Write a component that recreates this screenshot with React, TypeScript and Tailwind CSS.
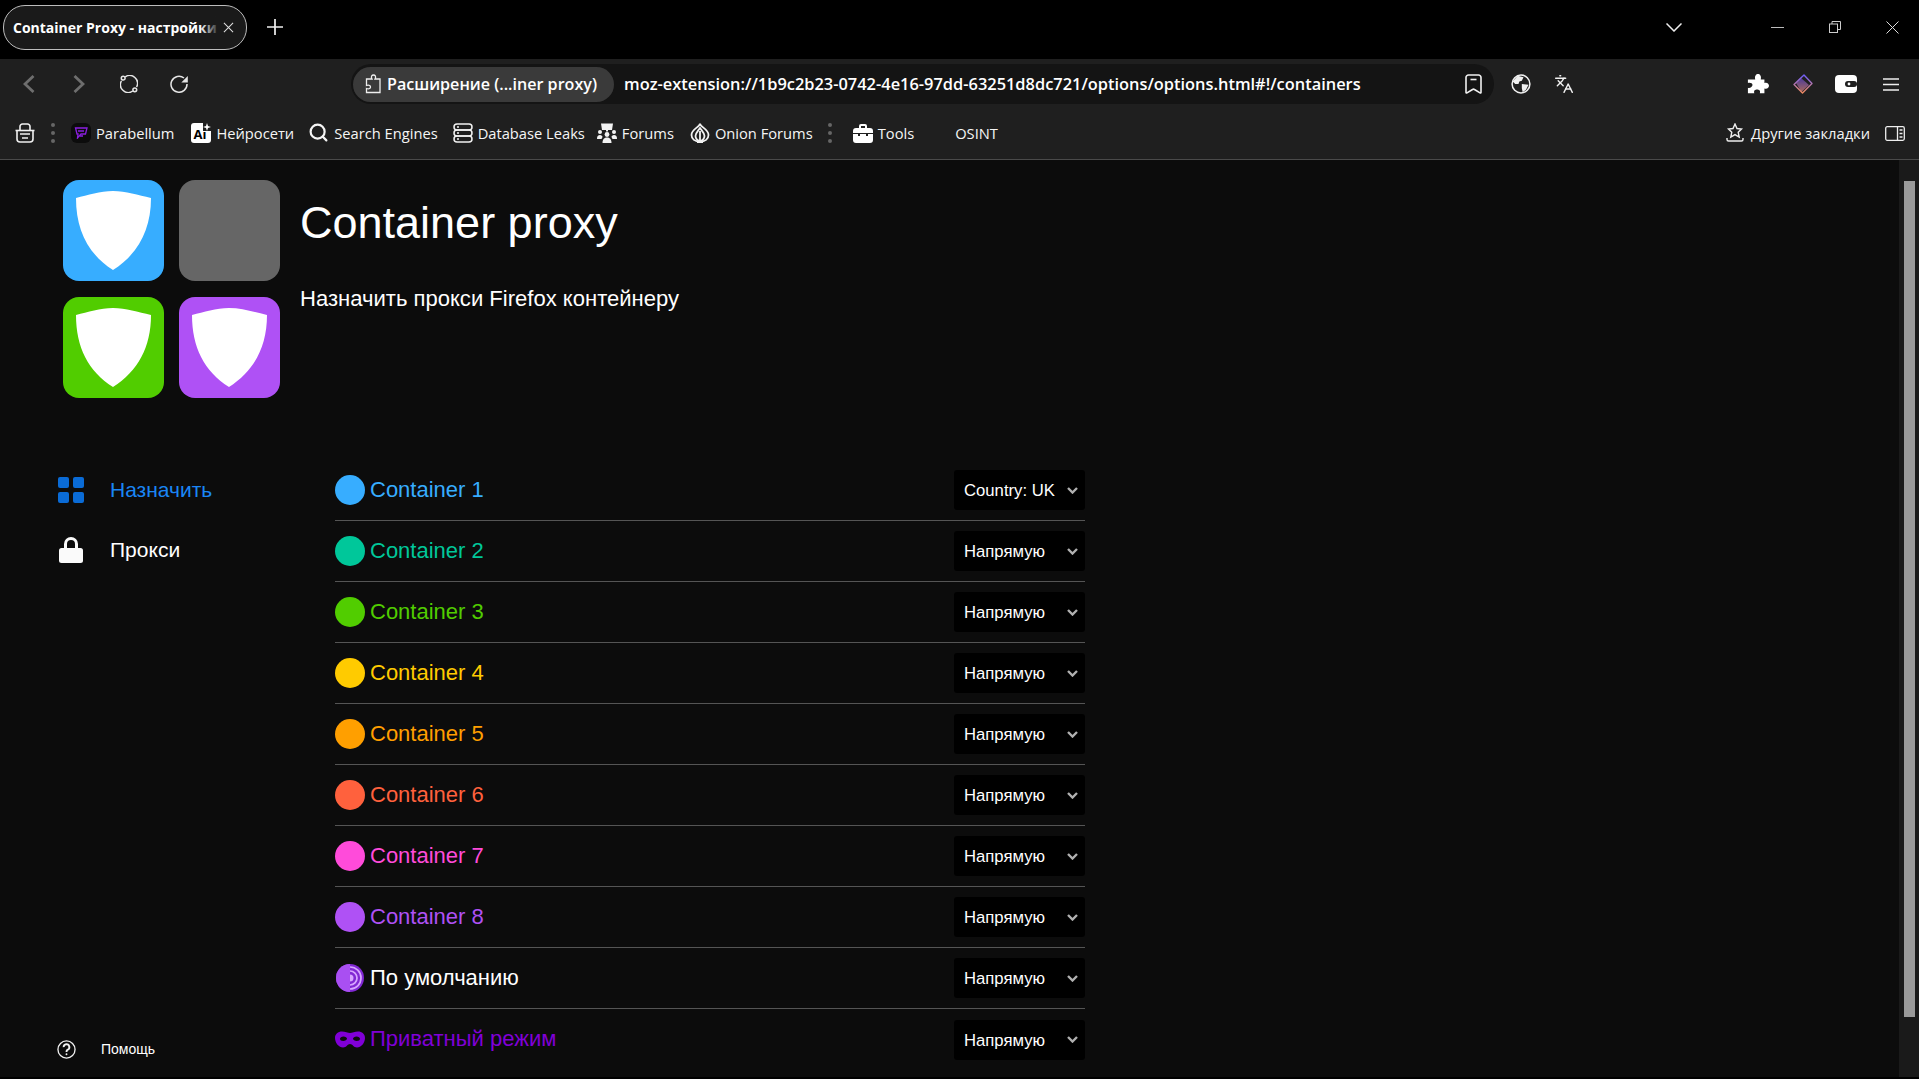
import { Languages, Search } from "lucide-react";

const font = "font-['Liberation_Sans',Arial,sans-serif]";
const uiFont = "font-['Open_Sans','Noto_Sans',sans-serif]";

const containers = [
  { name: "Container 1", color: "#37adff", proxy: "Country: UK" },
  { name: "Container 2", color: "#00c79a", proxy: "Напрямую" },
  { name: "Container 3", color: "#51cd00", proxy: "Напрямую" },
  { name: "Container 4", color: "#ffcb00", proxy: "Напрямую" },
  { name: "Container 5", color: "#ff9f00", proxy: "Напрямую" },
  { name: "Container 6", color: "#ff613d", proxy: "Напрямую" },
  { name: "Container 7", color: "#ff4bda", proxy: "Напрямую" },
  { name: "Container 8", color: "#af51f5", proxy: "Напрямую" },
];

function Shield() {
  return (
    <svg viewBox="0 0 101 101" className="w-[101px] h-[101px]">
      <path d="M13 18 C25 15 37 11 50 11 C63 11 75 15 88 18 C88 50 75 74 50 90 C25 74 13 50 13 18 Z" fill="#fff" />
    </svg>
  );
}

function Tile({ color, shield = true }: { color: string; shield?: boolean }) {
  return (
    <div className="w-[101px] h-[101px] rounded-[16px]" style={{ backgroundColor: color }}>
      {shield && <Shield />}
    </div>
  );
}

function Row({ icon, name, color, proxy, last }: { icon: React.ReactNode; name: string; color: string; proxy: string; last?: boolean }) {
  return (
    <div className={`h-[61px] flex items-center justify-between ${last ? "" : "border-b border-[#555555]"}`}>
      <div className="flex items-center gap-[5px] text-[22px]" style={{ color }}>
        {icon}
        <span className="pb-[2px]">{name}</span>
      </div>
      <div className="w-[131px] h-[40px] bg-black rounded-[3px] flex items-center justify-between pl-[10px] pr-[7px] text-white text-[16.7px]">
        <span className="pt-[2px]">{proxy}</span>
        <svg viewBox="0 0 11 7" className="w-[11px] h-[7px]" fill="none" stroke="#b0b0b0" strokeWidth="2.4">
          <path d="M1 1 L5.5 5.5 L10 1" />
        </svg>
      </div>
    </div>
  );
}

function Dot({ color }: { color: string }) {
  return <div className="w-[30px] h-[30px] rounded-full" style={{ backgroundColor: color }} />;
}

function TorIcon() {
  return (
    <svg viewBox="0 0 30 30" className="w-[30px] h-[30px]">
      <circle cx="15" cy="15" r="14" fill="#8128d4" />
      <path d="M15 1 A14 14 0 0 0 15 29 Z" fill="#a94ff2" />
      <g fill="none" stroke="#d7a6ff" strokeWidth="1.7">
        <path d="M15 4 A11 11 0 0 1 15 26" />
        <path d="M15 8 A7 7 0 0 1 15 22" />
      </g>
      <path d="M15 11.5 A3.5 3.5 0 0 1 15 18.5 Z" fill="#d7a6ff" />
    </svg>
  );
}

function MaskIcon() {
  return (
    <svg viewBox="0 0 30 17" className="w-[30px] h-[17px]">
      <path
        fillRule="evenodd"
        fill="#8000d7"
        d="M7 0.5 C10 0.5 13 2 15 2 C17 2 20 0.5 23 0.5 C27 0.5 30 3 30 7 C30 12 26 16.5 22 16.5 C18.5 16.5 17.5 13 15 13 C12.5 13 11.5 16.5 8 16.5 C4 16.5 0 12 0 7 C0 3 3 0.5 7 0.5 Z M8.5 5.5 C6.5 5.5 5 6.5 5 7.8 C5 9.2 6.5 10 8.2 10 C10.2 10 12 9 12 7.8 C12 6.5 10.5 5.5 8.5 5.5 Z M21.5 5.5 C19.5 5.5 18 6.5 18 7.8 C18 9 19.8 10 21.8 10 C23.5 10 25 9.2 25 7.8 C25 6.5 23.5 5.5 21.5 5.5 Z"
      />
    </svg>
  );
}

function Bm({ icon, label }: { icon?: React.ReactNode; label: string }) {
  return (
    <div className="flex items-center gap-[5px] text-[#f5f5f5] text-[14.7px]">
      {icon}
      <span>{label}</span>
    </div>
  );
}

function Dots() {
  return (
    <div className="flex flex-col gap-[4px]">
      <div className="w-[4px] h-[4px] rounded-full bg-[#666666]" />
      <div className="w-[4px] h-[4px] rounded-full bg-[#666666]" />
      <div className="w-[4px] h-[4px] rounded-full bg-[#666666]" />
    </div>
  );
}

function BrowserChrome() {
  return (
    <div className={uiFont}>
      <div className="h-[59px] bg-black flex items-center text-white">
        <div className="relative ml-[3px] mt-[-5px] w-[244px] h-[45px] rounded-[22px] border border-[#bdbdbd] bg-[#1a1a1a] flex items-center pl-[9px] pr-[12px] justify-between">
          <span className="text-[14px] font-bold w-[206px] whitespace-nowrap">Container Proxy - настройки</span>
          <div className="absolute left-[196px] top-[10px] w-[20px] h-[23px] bg-gradient-to-r from-transparent to-[#1a1a1a]" />
          <svg viewBox="0 0 12 12" className="w-[11px] h-[11px] relative" fill="none" stroke="#e0e0e0" strokeWidth="1.1">
            <path d="M1 1 L11 11 M11 1 L1 11" />
          </svg>
        </div>
        <svg viewBox="0 0 16 16" className="w-[16px] h-[16px] ml-[20px] mt-[-5px]" fill="none" stroke="#f0f0f0" strokeWidth="1.7">
          <path d="M8 0 V16 M0 8 H16" />
        </svg>
        <div className="flex-1" />
        <svg viewBox="0 0 16 9" className="w-[16px] h-[9px] mt-[-5px]" fill="none" stroke="#eeeeee" strokeWidth="1.5">
          <path d="M0.5 0.5 L8 8 L15.5 0.5" />
        </svg>
        <div className="ml-[89px] mt-[-5px] w-[13px] h-px bg-[#bbbbbb]" />
        <svg viewBox="0 0 12 12" className="w-[12px] h-[12px] ml-[45px] mt-[-5px]" fill="none" stroke="#cccccc">
          <rect x="0.5" y="3" width="8" height="8.5" />
          <path d="M3 3 V0.5 H11.5 V8.5 H8.5" />
        </svg>
        <svg viewBox="0 0 13 13" className="w-[13px] h-[13px] ml-[45px] mr-[20px] mt-[-5px]" fill="none" stroke="#dddddd">
          <path d="M0.5 0.5 L12.5 12.5 M12.5 0.5 L0.5 12.5" />
        </svg>
      </div>

      <div className="h-[45px] bg-[#1f1f1f] flex items-center pt-[5px] text-white">
        <svg viewBox="0 0 12 18" className="w-[12px] h-[18px] ml-[23px]" fill="none" stroke="#6e6e6e" strokeWidth="2.8">
          <path d="M10.5 1 L2 9 L10.5 17" />
        </svg>
        <svg viewBox="0 0 12 18" className="w-[12px] h-[18px] ml-[38px]" fill="none" stroke="#6e6e6e" strokeWidth="2.8">
          <path d="M1.5 1 L10 9 L1.5 17" />
        </svg>
        <svg viewBox="0 0 18 18" className="w-[18px] h-[18px] ml-[35px]" fill="none" stroke="#e6e6e6" strokeWidth="1.5">
          <path d="M5.2 2 A7.8 7.8 0 0 1 16.6 12" />
          <path d="M12.8 16 A7.8 7.8 0 0 1 1.4 6" />
          <circle cx="3.2" cy="3.2" r="1.9" />
          <circle cx="14.8" cy="14.8" r="1.9" />
        </svg>
        <svg viewBox="0 0 18 18" className="w-[18px] h-[18px] ml-[32px]" fill="none" stroke="#e6e6e6" strokeWidth="1.5">
          <path d="M14 3 A8 8 0 1 0 17 9" />
          <path d="M17.8 1 V7.5 H11.3 Z" fill="#e6e6e6" stroke="none" />
        </svg>
        <div className="ml-[163px] w-[1143px] h-[40px] rounded-[20px] bg-[#141414] flex items-center pl-[2px] pr-[12px]">
          <div className="w-[261px] h-[35px] rounded-[18px] bg-[#3a3a3a] flex items-center pl-[11px] gap-[5px] text-[16.1px] font-semibold whitespace-nowrap">
            <svg viewBox="0 0 18 20" className="w-[18px] h-[20px]" fill="none" stroke="#eeeeee" strokeWidth="1.3">
              <path d="M6 5 H8 C6.5 2.5 8 1 9.5 1 C11 1 12.5 2.5 11 5 H16 V18.5 H2.5 V14.5 C5.5 15.5 6.5 14 6.5 13 C6.5 12 5.5 10.5 2.5 11.5 V5 Z" />
            </svg>
            <span>Расширение (...iner proxy)</span>
          </div>
          <span className="ml-[10px] text-[16.4px] font-semibold text-white flex-1 whitespace-nowrap">moz-extension://1b9c2b23-0742-4e16-97dd-63251d8dc721/options/options.html#!/containers</span>
          <svg viewBox="0 0 17 20" className="w-[17px] h-[20px]" fill="none" stroke="#f0f0f0" strokeWidth="1.6">
            <path d="M3.5 1 H13.5 A2.5 2.5 0 0 1 16 3.5 V18.5 C16 19 15.5 19.2 15 18.9 L9.5 15.5 C8.8 15 8.2 15 7.5 15.5 L2 18.9 C1.5 19.2 1 19 1 18.5 V3.5 A2.5 2.5 0 0 1 3.5 1 Z" />
            <path d="M5.5 5.5 H11.5" />
          </svg>
        </div>
        <svg viewBox="0 0 24 24" className="w-[20px] h-[20px] ml-[17px]" fill="none">
          <circle cx="12" cy="12" r="10.7" stroke="#f0f0f0" strokeWidth="1.8" />
          <path d="M8 2 L15 4 L13 8 L10 9 L9 12 L5 12 L2 9 Z M13 12 L21 13 L18 19 L14 22 L13 17 Z" fill="#f0f0f0" />
        </svg>
        <Languages size={20} strokeWidth={1.7} className="ml-[23px] text-[#f0f0f0]" />
        <div className="flex-1" />
        <svg viewBox="0 0 24 24" className="w-[22px] h-[22px]" fill="#ffffff">
          <path d="M3 7 H9 C8 3 10 1 12 1 C14 1 16 3 15 7 H19 V11 C22 10 24 12 24 14 C24 16 22 18 19 17 V22 H14 C15 19 13 18 11 18 C9 18 7 19 8 22 H1 V16 C3 17 6 15 6 13 C6 11 3 10 1 11 V7 Z" />
        </svg>
        <svg viewBox="0 0 20 20" className="w-[20px] h-[20px] ml-[24px]" fill="none">
          <defs>
            <linearGradient id="gem" x1="0" y1="0" x2="0" y2="1">
              <stop offset="0" stopColor="#6d5dfc" />
              <stop offset="1" stopColor="#f08a5d" />
            </linearGradient>
            <linearGradient id="gemfill" x1="0" y1="0" x2="0" y2="1">
              <stop offset="0" stopColor="#4a3a9c" />
              <stop offset="1" stopColor="#a8685c" />
            </linearGradient>
          </defs>
          <path d="M7.5 3.5 L3 9 L8.5 18 L16 11 Z" fill="url(#gemfill)" />
          <path d="M11 1 L19 9.5 L9.5 19 L1 10.5 Z" stroke="url(#gem)" strokeWidth="1.4" strokeLinejoin="round" />
        </svg>
        <svg viewBox="0 0 22 18" className="w-[22px] h-[18px] ml-[22px]">
          <path d="M4 0 H18 A4 4 0 0 1 22 4 V14 A4 4 0 0 1 18 18 H4 A4 4 0 0 1 0 14 V4 A4 4 0 0 1 4 0 Z" fill="#fff" />
          <rect x="10" y="6" width="12" height="6" rx="3" fill="#1f1f1f" />
          <circle cx="14" cy="9" r="1.4" fill="#fff" />
        </svg>
        <svg viewBox="0 0 16 13" className="w-[16px] h-[13px] ml-[26px] mr-[20px]" fill="none" stroke="#eeeeee" strokeWidth="1.4">
          <path d="M0 1 H16 M0 6.5 H16 M0 12 H16" />
        </svg>
      </div>

      <div className="h-[56px] bg-[#1f1f1f] border-b border-[#4a4a4a] flex items-center pt-[3px]">
        <svg viewBox="0 0 20 20" className="w-[20px] h-[20px] ml-[15px]" fill="none" stroke="#f0f0f0" strokeWidth="1.6">
          <path d="M5 7 V3.5 A2.5 2.5 0 0 1 7.5 1 H12.5 A2.5 2.5 0 0 1 15 3.5 V7" />
          <path d="M0.5 7.5 H19.5" />
          <path d="M2 8 V16 A3 3 0 0 0 5 19 H15 A3 3 0 0 0 18 16 V8" />
          <path d="M5 11 H15 M7 15 H13" />
        </svg>
        <div className="ml-[16px]"><Dots /></div>
        <div className="ml-[16px]">
          <Bm
            label="Parabellum"
            icon={
              <div className="w-[20px] h-[20px] rounded-[6px] bg-[#0c0c0c] flex items-center justify-center">
                <svg viewBox="0 0 14 12" className="w-[14px] h-[12px]" fill="none" stroke="#8a1fe0" strokeWidth="1.3">
                  <path d="M1.5 1 H13 L11.5 7 H7 L3.5 11 L4 7 H3 Z" />
                  <path d="M4 4 H10 M6 9 H9" />
                </svg>
              </div>
            }
          />
        </div>
        <div className="ml-[17px]">
          <Bm
            label="Нейросети"
            icon={
              <div className="relative w-[20px] h-[20px] rounded-[3px] bg-white text-black text-[13px] font-bold pl-[2px] pt-[2px] leading-[18px]">
                Ai
                <div className="absolute right-[-1px] top-[-1px] w-[9px] h-[9px] bg-[#1f1f1f]" />
                <svg viewBox="0 0 8 8" className="absolute right-0 top-0 w-[8px] h-[8px]" fill="#ffffff">
                  <path d="M4 0 L5 3 L8 4 L5 5 L4 8 L3 5 L0 4 L3 3 Z" />
                </svg>
              </div>
            }
          />
        </div>
        <div className="ml-[14px]">
          <Bm label="Search Engines" icon={<Search size={21} strokeWidth={2.5} />} />
        </div>
        <div className="ml-[15px]">
          <Bm
            label="Database Leaks"
            icon={
              <svg viewBox="0 0 20 20" className="w-[20px] h-[20px]" fill="none" stroke="#f2f2f2" strokeWidth="1.5">
                <rect x="1" y="1" width="18" height="6" rx="3" />
                <rect x="1" y="7" width="18" height="6" rx="3" />
                <rect x="1" y="13" width="18" height="6" rx="3" />
                <path d="M4 4 H6 M4 10 H6 M4 16 H6" />
              </svg>
            }
          />
        </div>
        <div className="ml-[12px]">
          <Bm
            label="Forums"
            icon={
              <svg viewBox="0 0 20 20" className="w-[20px] h-[20px]" fill="#f2f2f2">
                <path d="M4 0.5 H16 L15 7 H11 V8.5 H9 V7 H5 Z" />
                <circle cx="10" cy="11.5" r="2.4" />
                <path d="M5.5 20 C5.5 16 7.5 14.5 10 14.5 C12.5 14.5 14.5 16 14.5 20 Z" />
                <circle cx="3" cy="9" r="2" />
                <circle cx="17" cy="9" r="2" />
                <path d="M0 16 C0 13 1 12 3 12 C4.5 12 5.5 13 5.5 14 L4.5 16 Z M15.5 16 L14.5 14 C14.5 13 15.5 12 17 12 C19 12 20 13 20 16 Z" />
              </svg>
            }
          />
        </div>
        <div className="ml-[16px]">
          <Bm
            label="Onion Forums"
            icon={
              <svg viewBox="0 0 20 20" className="w-[20px] h-[20px]" fill="none" stroke="#f2f2f2" strokeWidth="1.8">
                <path d="M10 0.5 C10 4 1.5 6 1.5 12 C1.5 16 5 18.5 10 18.5 C15 18.5 18.5 16 18.5 12 C18.5 6 10 4 10 0.5 Z" />
                <path d="M10 5 C8 8 5.5 10 5.5 13 C5.5 16 8 18 10 18 C12 18 14.5 16 14.5 13 C14.5 10 12 8 10 5 Z" />
                <path d="M10 8 V18 M7 19.5 H13" />
              </svg>
            }
          />
        </div>
        <div className="ml-[15px]"><Dots /></div>
        <div className="ml-[21px]">
          <Bm
            label="Tools"
            icon={
              <svg viewBox="0 0 20 20" className="w-[20px] h-[20px]" fill="#ffffff">
                <path d="M6 5 V3 A2 2 0 0 1 8 1 H12 A2 2 0 0 1 14 3 V5 H17 A3 3 0 0 1 20 8 V10 H0 V8 A3 3 0 0 1 3 5 Z M8 5 H12 V3 H8 Z" fillRule="evenodd" />
                <path d="M0 11 H5 V13 H7 V11 H13 V13 H15 V11 H20 V17 A3 3 0 0 1 17 20 H3 A3 3 0 0 1 0 17 Z" />
              </svg>
            }
          />
        </div>
        <div className="ml-[41px]"><Bm label="OSINT" /></div>
        <div className="flex-1" />
        <Bm
          label="Другие закладки"
          icon={
            <svg viewBox="0 0 18 19" className="w-[18px] h-[19px] mr-[2px]" fill="none" stroke="#eeeeee" strokeWidth="1.4">
              <path d="M9 1 L11 5.5 L15.5 6 L12.2 9.2 L13.2 14 L9 11.6 L4.8 14 L5.8 9.2 L2.5 6 L7 5.5 Z" />
              <path d="M1 15 V16.5 A1.5 1.5 0 0 0 2.5 18 H15.5 A1.5 1.5 0 0 0 17 16.5 V15" />
            </svg>
          }
        />
        <svg viewBox="0 0 20 15" className="w-[20px] h-[15px] ml-[15px] mr-[14px]" fill="none" stroke="#eeeeee" strokeWidth="1.3">
          <rect x="0.7" y="0.7" width="18.6" height="13.6" rx="1.5" />
          <path d="M12.5 1 V14 M14.5 4 H17.5 M14.5 7.5 H17.5 M14.5 11 H17.5" />
        </svg>
      </div>
    </div>
  );
}

export default function App() {
  return (
    <div className={`h-screen w-full flex flex-col overflow-hidden bg-[#0c0c0c] ${font}`}>
      <BrowserChrome />
      <div className="flex-1 flex min-h-0">
        <div className="flex-1 min-w-0 flex flex-col">
          <div className="h-[300px] pl-[63px] pt-[20px] flex items-start shrink-0">
            <div className="grid grid-cols-2 gap-x-[15px] gap-y-[16px] w-[217px]">
              <Tile color="#37adff" />
              <Tile color="#666666" shield={false} />
              <Tile color="#51cd00" />
              <Tile color="#af51f5" />
            </div>
            <div className="ml-[20px] text-white">
              <h1 className="text-[45px] leading-[60px] mt-[13px]">Container proxy</h1>
              <p className="text-[22.05px] leading-[28px] mt-[32px]">Назначить прокси Firefox контейнеру</p>
            </div>
          </div>

          <div className="flex-1 flex min-h-0">
            <div className="w-[335px] shrink-0 flex flex-col justify-between pl-[58px] pb-[17px] text-white">
              <div className="flex flex-col gap-[32px] text-[21px] pt-[16px]">
                <div className="flex items-center gap-[26px] text-[#1a86f5] h-[28px]">
                  <div className="grid grid-cols-2 gap-[4px] w-[26px] h-[26px]">
                    <div className="rounded-[2px] bg-[#0a6bd6]" />
                    <div className="rounded-[2px] bg-[#0a6bd6]" />
                    <div className="rounded-[2px] bg-[#0a6bd6]" />
                    <div className="rounded-[2px] bg-[#0a6bd6]" />
                  </div>
                  <span>Назначить</span>
                </div>
                <div className="flex items-center gap-[26px] h-[28px]">
                  <svg viewBox="0 0 26 26" className="w-[26px] h-[26px]">
                    <path d="M6 12 V7 A7 7 0 0 1 20 7 V12 H17 V7 A4 4 0 0 0 9 7 V12 Z" fill="#fafafa" />
                    <rect x="1" y="11" width="24" height="15" rx="2.5" fill="#fafafa" />
                  </svg>
                  <span>Прокси</span>
                </div>
              </div>
              <div className="flex items-center gap-[25px] text-[14px] ml-[-1px]">
                <svg viewBox="0 0 20 20" className="w-[19px] h-[19px]" fill="none" stroke="#f0f0f0" strokeWidth="1.4">
                  <circle cx="10" cy="10" r="9" />
                  <path d="M7 7.5 A3 3 0 1 1 11 10.3 C10 10.8 10 11.3 10 12.5" strokeWidth="2" />
                  <circle cx="10" cy="15" r="1" fill="#f0f0f0" stroke="none" />
                </svg>
                <span>Помощь</span>
              </div>
            </div>

            <div className="w-[750px] shrink-0">
              {containers.map((c) => (
                <Row key={c.name} icon={<Dot color={c.color} />} name={c.name} color={c.color} proxy={c.proxy} />
              ))}
              <Row icon={<TorIcon />} name="По умолчанию" color="#ffffff" proxy="Напрямую" />
              <Row icon={<MaskIcon />} name="Приватный режим" color="#8000d7" proxy="Напрямую" last />
            </div>
          </div>
        </div>

        <div className="w-[20px] shrink-0 bg-[#1a1a1a] pt-[21px] pb-[60px] flex justify-end pr-[4px]">
          <div className="w-[11px] h-full bg-[#9a9a9a]" />
        </div>
      </div>
      <div className="h-[2px] shrink-0 bg-black" />
    </div>
  );
}
